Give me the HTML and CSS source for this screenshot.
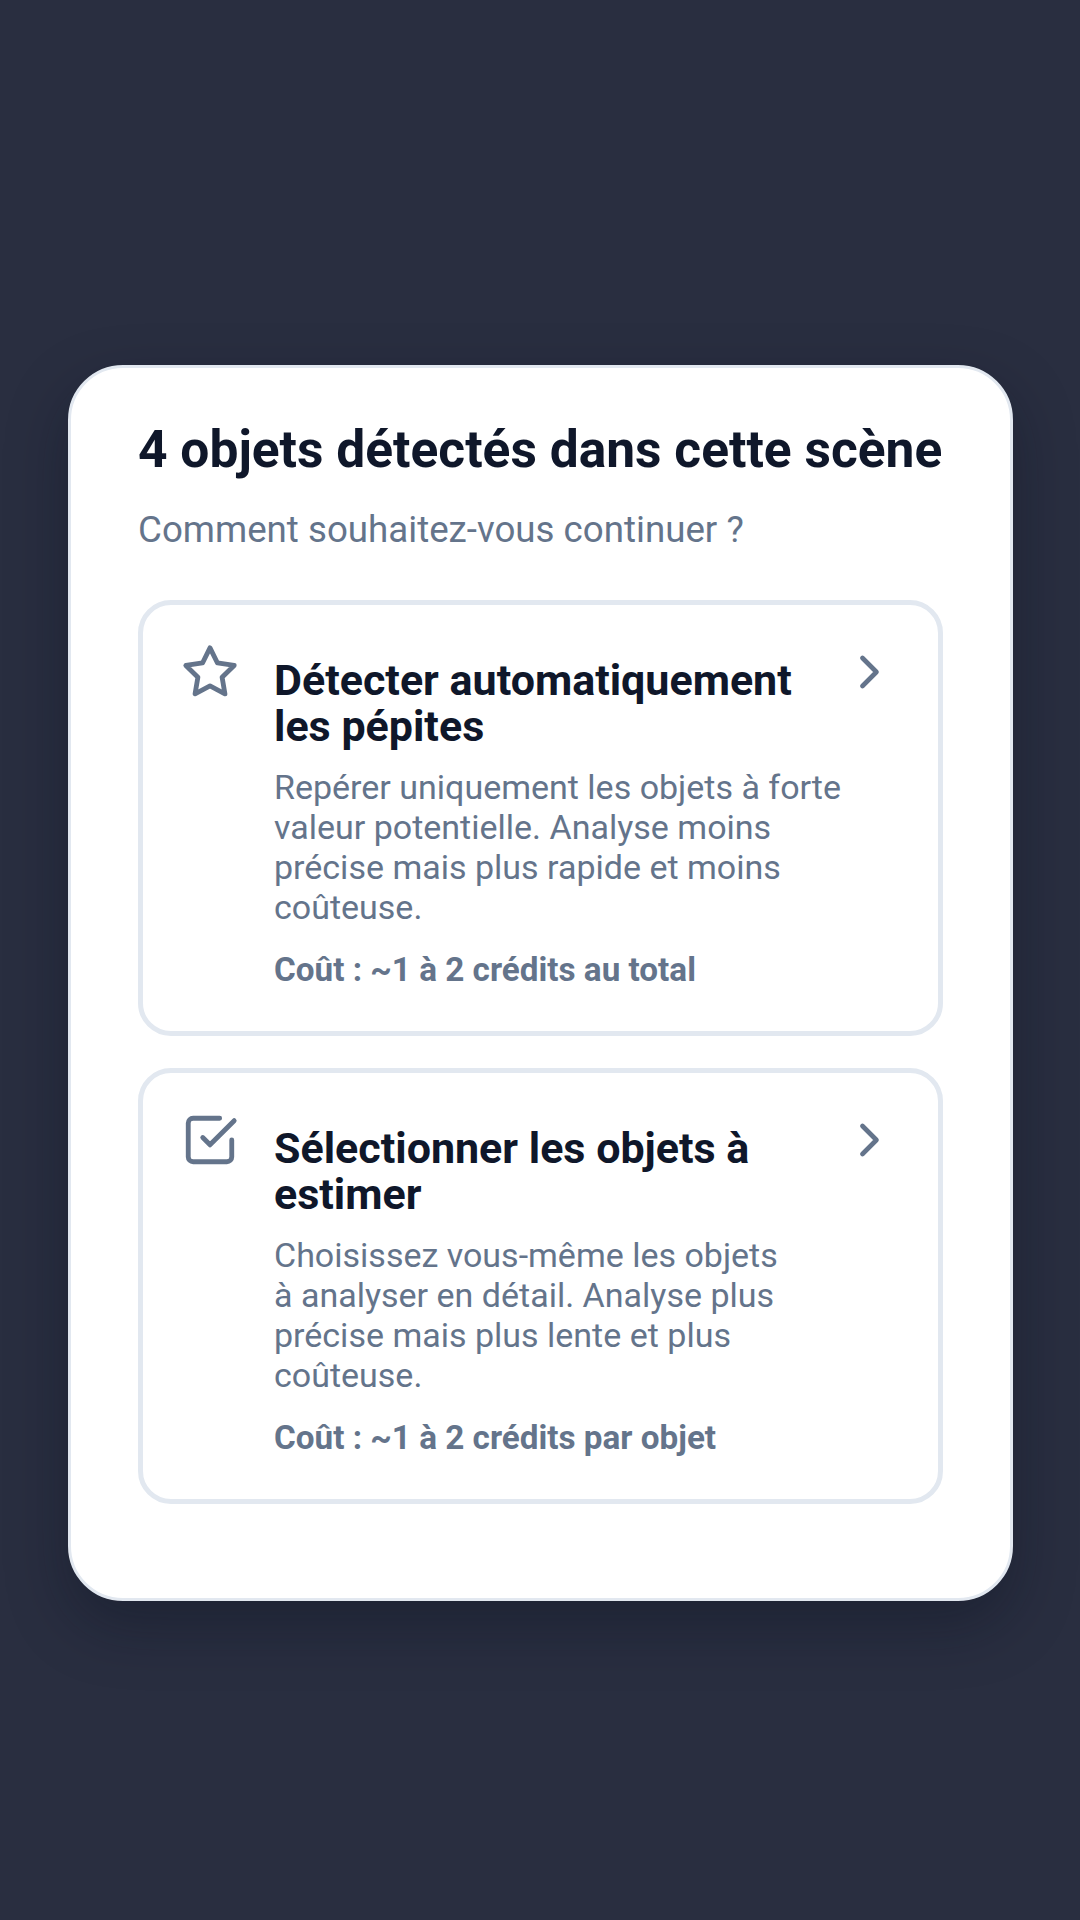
FILE: index.html
```html
<!doctype html>
<html lang="fr">

<head>
  <meta charset="utf-8">
  <title>Objets détectés</title>
  <meta name="viewport" content="width=device-width, initial-scale=1">
  <link rel="stylesheet" href="styles.css">
</head>

<body>

  <div class="sheet">
    <h1 class="sheet-title">4 objets détectés dans cette scène</h1>
    <p class="sheet-sub">Comment souhaitez-vous continuer ?</p>

    <div class="options">
      <div class="option">
        <svg class="ico" viewBox="0 0 24 24">
          <polygon points="12 2 15.09 8.26 22 9.27 17 14.14 18.18 21.02 12 17.77 5.82 21.02 7 14.14 2 9.27 8.91 8.26 12 2"/>
        </svg>
        <div class="option-body">
          <div class="option-title">Détecter automatiquement les pépites</div>
          <div class="option-desc">Repérer uniquement les objets à forte valeur potentielle. Analyse moins précise mais plus rapide et moins coûteuse.</div>
          <div class="option-cost">Coût : ~1 à 2 crédits au total</div>
        </div>
        <svg class="chev" viewBox="5.8 0 18.86 24">
          <path d="m9 18 6-6-6-6"/>
        </svg>
      </div>

      <div class="option">
        <svg class="ico" viewBox="0 0 24 24">
          <polyline points="9 11 12 14 22 4"/>
          <path d="M21 12v7a2 2 0 0 1-2 2H5a2 2 0 0 1-2-2V5a2 2 0 0 1 2-2h11"/>
        </svg>
        <div class="option-body">
          <div class="option-title">Sélectionner les objets à estimer</div>
          <div class="option-desc">Choisissez vous-même les objets à&nbsp;analyser en détail. Analyse plus précise mais plus lente et plus coûteuse.</div>
          <div class="option-cost">Coût : ~1 à 2 crédits par objet</div>
        </div>
        <svg class="chev" viewBox="5.8 0 18.86 24">
          <path d="m9 18 6-6-6-6"/>
        </svg>
      </div>
    </div>
  </div>

</body>

</html>
```

FILE: styles.css
```css
html, body{
    margin: 0;
    padding: 0;
}
body{
    background: #292e40;
    font-family: Roboto, "Liberation Sans", sans-serif;
    padding: 365px 67px 0 68px;
    height: 1920px;
    box-sizing: border-box;
}
.sheet{
    background: #fff;
    border: 3px solid #e2e8f0;
    border-radius: 55px;
    padding: 52px 67px 94px 67px;
    box-shadow: 0 24px 60px rgba(10, 14, 28, 0.35);
}
.sheet-title{
    margin: 0;
    font-size: 51.5px;
    line-height: 60px;
    font-weight: 700;
    color: #0f172a;
}
.sheet-sub{
    margin: 27px 0 0 0;
    font-size: 36.7px;
    line-height: 46px;
    color: #64748b;
}
.options{
    margin-top: 47px;
    display: flex;
    flex-direction: column;
    gap: 32px;
}
.option{
    display: flex;
    align-items: flex-start;
    border: 5px solid #e2e8f0;
    border-radius: 33px;
    padding: 39px 39px 41px 39px;
}
.ico{
    width: 58px;
    height: 58px;
    margin: -1px 0 0 -1px;
    flex: none;
    fill: none;
    stroke: #64748b;
    stroke-width: 2;
    stroke-linecap: round;
    stroke-linejoin: round;
}
.chev{
    width: 44px;
    height: 56px;
    flex: none;
    fill: none;
    stroke: #64748b;
    stroke-width: 2;
    stroke-linecap: round;
    stroke-linejoin: round;
}
.option-body{
    flex: 1;
    margin: 13px 0 0 35px;
}
.option-title{
    font-size: 43px;
    line-height: 46px;
    font-weight: 700;
    color: #0f172a;
}
.option-desc{
    margin-top: 18px;
    font-size: 34px;
    line-height: 40px;
    color: #64748b;
}
.option-cost{
    margin-top: 23px;
    font-size: 33.25px;
    line-height: 40px;
    font-weight: 700;
    color: #64748b;
}
```
